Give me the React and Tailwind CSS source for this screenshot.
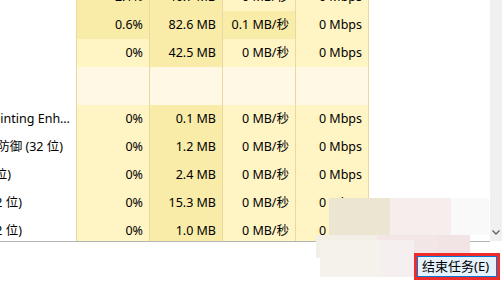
import React from "react";

const HOT = "bg-[#f9eca8]";
const COOL = "bg-[#fff4c4]";
const BLANK = "bg-[#fff8e4]";

const rows = [
  { name: "", cpu: "2.1%", mem: "46.7 MB", disk: "0 MB/秒", net: "0 Mbps", cpuHot: true },
  { name: "", cpu: "0.6%", mem: "82.6 MB", disk: "0.1 MB/秒", net: "0 Mbps", cpuHot: true, diskHot: true },
  { name: "", cpu: "0%", mem: "42.5 MB", disk: "0 MB/秒", net: "0 Mbps" },
  { blank: true },
  { name: "Synaptics pointing Enh…", pad: "pr-[6px]", cpu: "0%", mem: "0.1 MB", disk: "0 MB/秒", net: "0 Mbps" },
  { name: "360安全防御 (32 位)", pad: "pr-[13px]", cpu: "0%", mem: "1.2 MB", disk: "0 MB/秒", net: "0 Mbps" },
  { name: "(32 位)", pad: "pr-[65px]", cpu: "0%", mem: "2.4 MB", disk: "0 MB/秒", net: "0 Mbps" },
  { name: "(32 位)", pad: "pr-[54px]", cpu: "0%", mem: "15.3 MB", disk: "0 MB/秒", net: "0 Mbps" },
  { name: "(32 位)", pad: "pr-[54px]", cpu: "0%", mem: "1.0 MB", disk: "0 MB/秒", net: "0 Mbps" },
];

function Cell({ children, color, last }) {
  return (
    <div
      className={`flex items-center justify-end pr-[6px] border-l border-[#ead8a0] ${
        last ? "w-[74px] border-r" : "w-[73px]"
      } ${color}`}
    >
      {children}
    </div>
  );
}

function Row({ row }) {
  if (row.blank) {
    return (
      <div className="flex h-[38px]">
        <div className="w-[76px] bg-white" />
        <Cell color={BLANK} />
        <Cell color={BLANK} />
        <Cell color={BLANK} />
        <Cell color={BLANK} last />
      </div>
    );
  }
  return (
    <div className="flex h-[28px]">
      <div className={`w-[76px] flex items-center justify-end overflow-hidden bg-white ${row.pad || ""}`}>
        <span className="whitespace-nowrap shrink-0">{row.name}</span>
      </div>
      <Cell color={row.cpuHot ? HOT : COOL}>{row.cpu}</Cell>
      <Cell color={HOT}>{row.mem}</Cell>
      <Cell color={row.diskHot ? HOT : COOL}>{row.disk}</Cell>
      <Cell color={COOL} last>
        {row.net}
      </Cell>
    </div>
  );
}

export default function App() {
  return (
    <div
      className="relative w-[502px] h-[286px] overflow-hidden bg-white text-[12.5px] text-black"
      style={{ fontFamily: '"Noto Sans", "Noto Sans CJK SC", sans-serif' }}
    >
      <div className="flex">
        <div className="w-[490px] h-[242px] overflow-hidden border-b border-[#b4b4b4]">
          <div className="-mt-[17px]">
            {rows.map((row, i) => (
              <Row key={i} row={row} />
            ))}
          </div>
        </div>
        <div className="w-[12px] h-[241px] bg-[#f0f0f0] flex flex-col justify-end items-center pb-[6px]">
          <svg width="8" height="5" viewBox="0 0 8 5">
            <path d="M0.5 0.5 L4 4 L7.5 0.5" fill="none" stroke="#606060" strokeWidth="1.3" />
          </svg>
        </div>
      </div>

      <div className="flex justify-end pr-[2px] pt-[11px]">
        <div className="border-[3px] border-[#ef2b2b]">
          <button className="w-[80px] h-[21px] border border-[#0078d7] bg-[#e5f1fb] pl-[4px] text-left text-[13px] leading-[19px] whitespace-nowrap">
            结束任务(E)
          </button>
        </div>
      </div>

      {/* privacy mosaic blocks */}
      <div className="absolute left-[329px] top-[198px] w-[61px] h-[37px] bg-[#ebe5d2]" />
      <div className="absolute left-[390px] top-[198px] w-[61px] h-[37px] bg-[#f6eded]" />
      <div className="absolute left-[451px] top-[198px] w-[38px] h-[37px] bg-[#f9f9f9]" />
      <div className="absolute left-[316px] top-[235px] w-[61px] h-[23px] bg-[#f2efe7]" />
      <div className="absolute left-[377px] top-[235px] w-[61px] h-[18px] bg-[#f3e6e6]" />
      <div className="absolute left-[438px] top-[235px] w-[32px] h-[18px] bg-[#f2e4e4]" />
      <div className="absolute left-[320px] top-[240px] w-[61px] h-[37px] bg-[#f5f2ec]" />
      <div className="absolute left-[381px] top-[240px] w-[33px] h-[37px] bg-[#f5f0ef]" />
    </div>
  );
}
